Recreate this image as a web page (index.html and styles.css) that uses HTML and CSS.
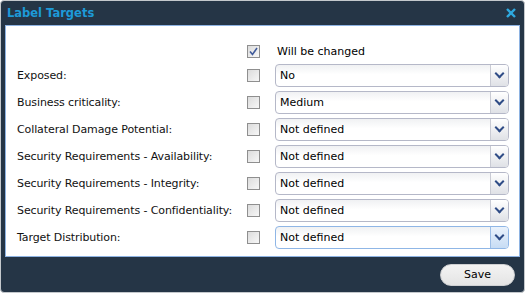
FILE: index.html
```html
<!DOCTYPE html>
<html lang="en">
<head>
  <meta charset="UTF-8" />
  <title>Label Targets</title>
  <link rel="stylesheet" href="styles.css">
</head>
<body>

  <div class="window">
    <div class="titlebar">
      <span class="title">Label Targets</span>
      <svg class="close" width="10" height="10" viewBox="0 0 10 10"><path d="M1 1 L9 9 M9 1 L1 9" stroke="#2ea9e0" stroke-width="2.4"/></svg>
    </div>

    <div class="panel">
      <div class="row head">
        <span></span>
        <span class="check checked">
          <svg width="9" height="9" viewBox="0 0 9 9"><path d="M1 4.5 L3.5 7.5 L8 1" fill="none" stroke="#3f5a9a" stroke-width="1.6"/></svg>
        </span>
        <span class="changed">Will be changed</span>
      </div>

      <div class="row">
        <span class="label">Exposed:</span>
        <span class="check"></span>
        <div class="select"><span class="value">No</span><span class="arrow"></span></div>
      </div>
      <div class="row">
        <span class="label">Business criticality:</span>
        <span class="check"></span>
        <div class="select"><span class="value">Medium</span><span class="arrow"></span></div>
      </div>
      <div class="row">
        <span class="label">Collateral Damage Potential:</span>
        <span class="check"></span>
        <div class="select"><span class="value">Not defined</span><span class="arrow"></span></div>
      </div>
      <div class="row">
        <span class="label">Security Requirements - Availability:</span>
        <span class="check"></span>
        <div class="select"><span class="value">Not defined</span><span class="arrow"></span></div>
      </div>
      <div class="row">
        <span class="label">Security Requirements - Integrity:</span>
        <span class="check"></span>
        <div class="select"><span class="value">Not defined</span><span class="arrow"></span></div>
      </div>
      <div class="row">
        <span class="label">Security Requirements - Confidentiality:</span>
        <span class="check"></span>
        <div class="select"><span class="value">Not defined</span><span class="arrow"></span></div>
      </div>
      <div class="row">
        <span class="label">Target Distribution:</span>
        <span class="check"></span>
        <div class="select hover"><span class="value">Not defined</span><span class="arrow"></span></div>
      </div>
    </div>

    <div class="footer">
      <button class="save">Save</button>
    </div>
  </div>

</body>
</html>
```

FILE: styles.css
```css
body {
  margin: 0;
  background: #ffffff;
  font-family: "DejaVu Sans", Verdana, sans-serif;
  font-size: 11px;
  color: #000000;
}
.window {
  width: 523px;
  height: 291px;
  background: #253546;
  border: 1px solid #c4c8cc;
  border-radius: 4px;
  display: flex;
  flex-direction: column;
}
.titlebar {
  height: 24px;
  display: flex;
  align-items: center;
  justify-content: space-between;
  padding: 0 8px 0 6px;
}
.title {
  color: #1d9ad8;
  font-weight: bold;
  font-size: 11.5px;
}
.panel {
  margin: 0 4px;
  height: 232px;
  background: #ffffff;
  border: 1px solid #8eb3e2;
  padding: 15px 0 0 11px;
  box-sizing: border-box;
}
.row {
  display: grid;
  grid-template-columns: 230px 28px 234px;
  align-items: center;
  height: 27px;
}
.row.head {
  height: 20px;
  margin-bottom: 1px;
}
.label {
  color: #111111;
  white-space: nowrap;
  letter-spacing: -0.1px;
}
.changed {
  padding-left: 2px;
}
.check {
  width: 11px;
  height: 11px;
  border: 1px solid #8f8f8f;
  background: linear-gradient(135deg, #dcdcdc, #f7f7f7);
  display: flex;
  align-items: center;
  justify-content: center;
}
.select {
  height: 23px;
  box-sizing: border-box;
  border: 1px solid #b5b8c8;
  border-radius: 4px;
  background: linear-gradient(#f0f1f3, #ffffff 45%);
  display: flex;
  overflow: hidden;
}
.value {
  flex: 1;
  padding-left: 4px;
  line-height: 21px;
}
.arrow {
  width: 17px;
  border-left: 1px solid #c9cbd4;
  background: linear-gradient(#ffffff, #dfe1e6);
  position: relative;
}
.arrow::after {
  content: "";
  position: absolute;
  left: 5px;
  top: 5px;
  width: 5px;
  height: 5px;
  border-right: 2px solid #2f4c86;
  border-bottom: 2px solid #2f4c86;
  transform: rotate(45deg);
}
.select.hover {
  border-color: #8fb6e6;
}
.select.hover .arrow {
  border-left-color: #9cbde6;
  background: linear-gradient(#eaf2fc, #c7dcf4);
}
.footer {
  flex: 1;
  display: flex;
  justify-content: flex-end;
  align-items: center;
  padding-right: 9px;
}
.save {
  width: 75px;
  height: 22px;
  border: 1px solid #cfd0d2;
  border-radius: 11px;
  background: linear-gradient(#f3f3f3, #e4e4e4);
  font-family: inherit;
  font-size: 11px;
  color: #000000;
  padding: 0;
}
```
